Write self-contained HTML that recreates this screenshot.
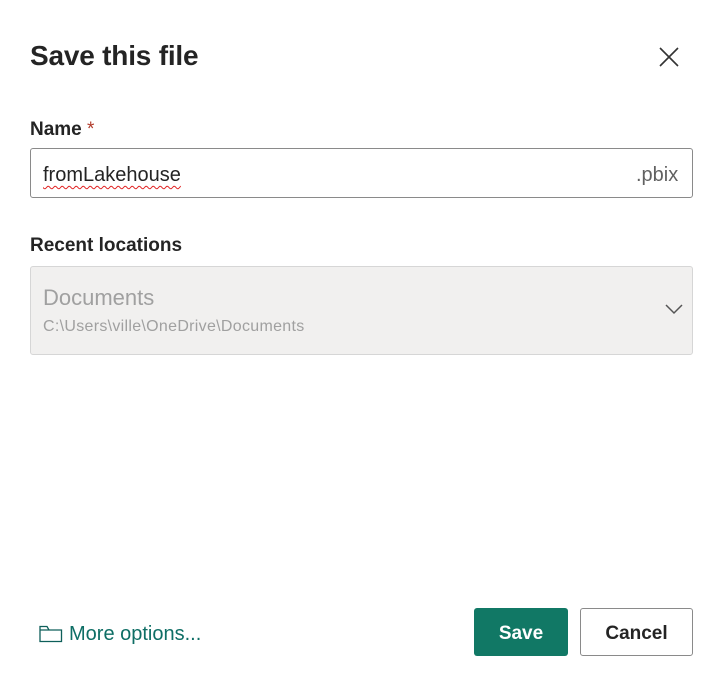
<!DOCTYPE html>
<html><head><style>
body{margin:0;width:724px;height:682px;background:#fff;font-family:"Liberation Sans",sans-serif;position:relative;overflow:hidden;color:#242424}
.a{position:absolute}
</style></head><body>
<div class="a" style="left:30px;top:40px;font-size:28px;font-weight:bold;letter-spacing:-0.2px">Save this file</div>
<svg class="a" style="left:658px;top:46px" width="22" height="22" viewBox="0 0 22 22"><path d="M2 2L20 20M20 2L2 20" stroke="#333" stroke-width="1.6"/></svg>
<div class="a" style="left:30px;top:119px;font-size:19px;font-weight:bold">Name <span style="color:#b13a2a;font-weight:normal">*</span></div>
<div class="a" style="left:30px;top:148px;width:661px;height:48px;border:1px solid #8a8a8a;border-radius:3px"></div>
<div class="a" style="left:43px;top:164px;font-size:20px;text-decoration:underline wavy #e02020;text-decoration-thickness:1px;text-underline-offset:4px">fromLakehouse</div>
<div class="a" style="left:636px;top:164px;font-size:20px;color:#616161">.pbix</div>
<div class="a" style="left:30px;top:235px;font-size:19px;font-weight:bold">Recent locations</div>
<div class="a" style="left:30px;top:266px;width:661px;height:87px;border:1px solid #d6d6d6;background:#f1f0ef;border-radius:3px"></div>
<div class="a" style="left:43px;top:285px;font-size:22px;color:#a0a0a0">Documents</div>
<div class="a" style="left:43px;top:318px;font-size:16px;color:#a0a0a0;letter-spacing:0.3px">C:\Users\ville\OneDrive\Documents</div>
<svg class="a" style="left:664px;top:302px" width="20" height="14" viewBox="0 0 20 14"><path d="M2 3L10 11L18 3" stroke="#555" stroke-width="1.5" fill="none"/></svg>
<svg class="a" style="left:39px;top:625px" width="24" height="18" viewBox="0 0 24 18"><path d="M1 2.5V16.5H22.5V5H10L8 1.5H1Z M1 5H10" stroke="#0e5f5a" stroke-width="1.3" fill="none"/></svg>
<div class="a" style="left:69px;top:623px;font-size:20px;color:#0e6e65">More options...</div>
<div class="a" style="left:474px;top:608px;width:94px;height:48px;background:#117865;border-radius:3px;color:#fff;font-size:19px;font-weight:bold;line-height:52px;text-align:center">Save</div>
<div class="a" style="left:580px;top:608px;width:111px;height:46px;border:1px solid #8a8a8a;border-radius:3px;font-size:19px;font-weight:bold;line-height:50px;text-align:center">Cancel</div>
</body></html>
